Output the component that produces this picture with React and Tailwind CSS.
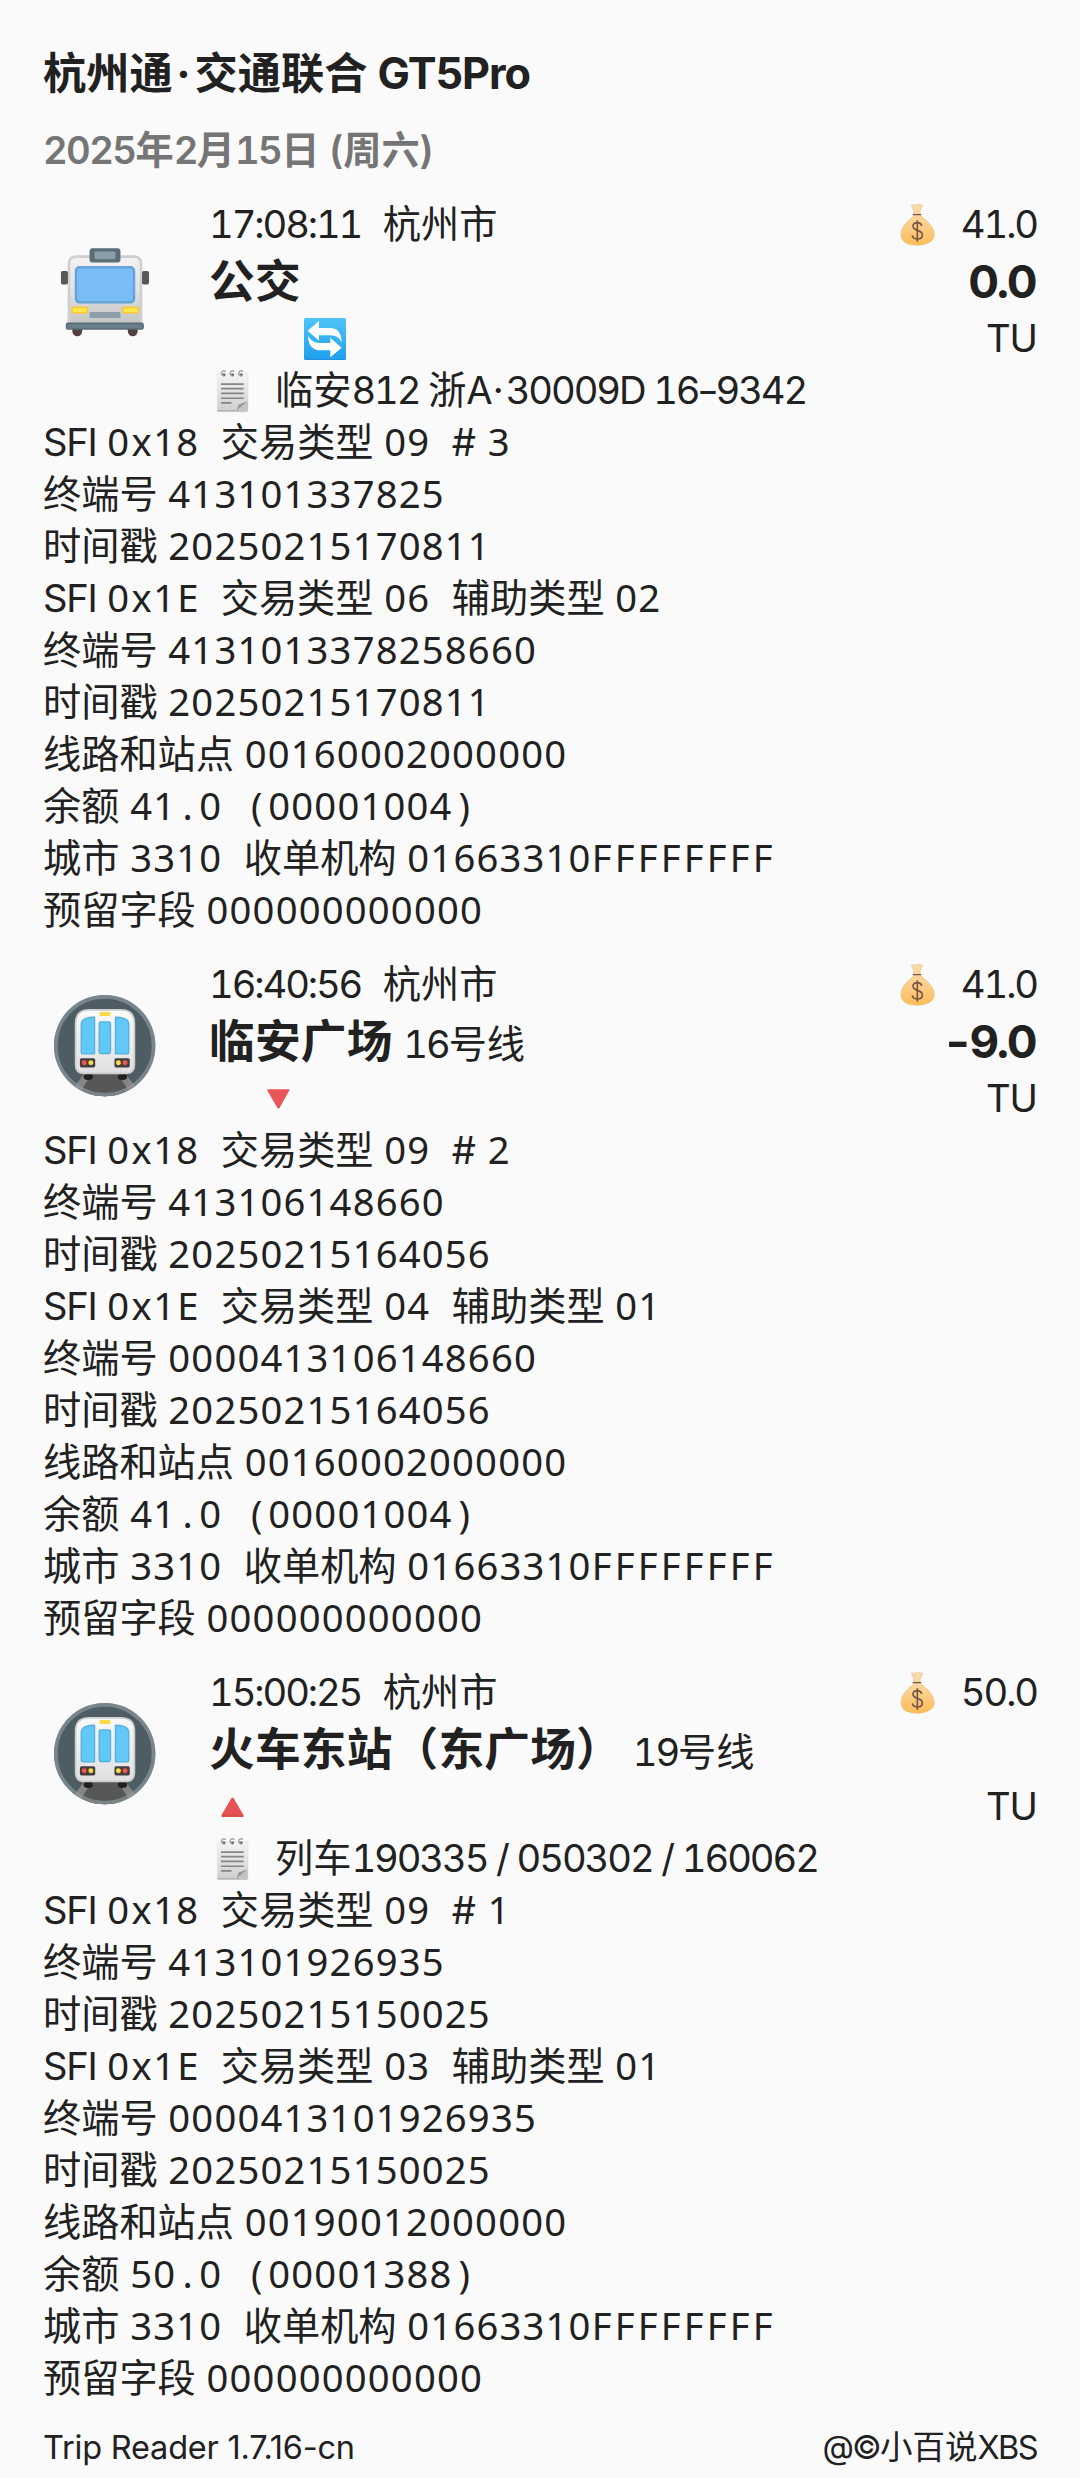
const trips = [
  {
    icon: "bus",
    time: "17:08:11",
    city: "杭州市",
    balance: "41.0",
    title: "公交",
    line: "",
    amount: "0.0",
    mark: "transfer",
    note: [
      { text: "临安" },
      { text: "812", latin: true },
      { text: " ", tight: true },
      { text: "浙" },
      { text: "A", tight: true },
      { text: "·", dot: true },
      { text: "30009D", latin: true },
      { text: " ", tight: true },
      { text: "16", latin: true },
      { text: "-", dash: true },
      { text: "9342", latin: true },
    ],
    type: "09",
    index: "3",
    terminal: "413101337825",
    stamp: "20250215170811",
    type2: "06",
    sub: "02",
    terminal2: "4131013378258660",
    station: "00160002000000",
    raw: "41.0 (00001004)",
  },
  {
    icon: "metro",
    time: "16:40:56",
    city: "杭州市",
    balance: "41.0",
    title: "临安广场",
    line: "16",
    amount: "-9.0",
    mark: "down",
    note: null,
    type: "09",
    index: "2",
    terminal: "413106148660",
    stamp: "20250215164056",
    type2: "04",
    sub: "01",
    terminal2: "0000413106148660",
    station: "00160002000000",
    raw: "41.0 (00001004)",
  },
  {
    icon: "metro",
    time: "15:00:25",
    city: "杭州市",
    balance: "50.0",
    title: "火车东站（东广场）",
    line: "19",
    amount: "",
    mark: "up",
    note: [
      { text: "列车" },
      { text: "190335", latin: true },
      { text: " / ", tight: true },
      { text: "050302", latin: true },
      { text: " / ", tight: true },
      { text: "160062", latin: true },
    ],
    type: "09",
    index: "1",
    terminal: "413101926935",
    stamp: "20250215150025",
    type2: "03",
    sub: "01",
    terminal2: "0000413101926935",
    station: "00190012000000",
    raw: "50.0 (00001388)",
  },
];

const BusIcon = () => (
  <svg viewBox="34 6 325 325" className="w-[108px] h-[108px]">
    <defs>
      <linearGradient id="busBody" x1="0" y1="0" x2="0" y2="1">
        <stop offset="0" stopColor="#f2f2f2" />
        <stop offset="0.5" stopColor="#e2e2e2" />
        <stop offset="1" stopColor="#c4c4c4" />
      </linearGradient>
    </defs>
    <ellipse cx="113" cy="303" rx="15" ry="17" fill="#543f3f" />
    <ellipse cx="280" cy="303" rx="15" ry="17" fill="#543f3f" />
    <path d="M88 285V102q0-22 22-22h173q22 0 22 22v183z" fill="url(#busBody)" stroke="#cfcfcf" strokeWidth="8" />
    <rect x="64" y="123" width="21" height="41" rx="5" fill="#585858" />
    <rect x="308" y="123" width="21" height="41" rx="5" fill="#585858" />
    <rect x="109" y="112" width="175" height="106" rx="11" fill="#78bdf8" stroke="#65a3d6" strokeWidth="7" />
    <rect x="150" y="55" width="93" height="43" rx="9" fill="#5a6d77" />
    <rect x="165" y="65" width="63" height="23" rx="4" fill="#8b9ea9" />
    <rect x="98" y="233" width="45" height="16" fill="#ffe94f" stroke="#fdc834" strokeWidth="5" />
    <rect x="251" y="233" width="45" height="16" fill="#ffe94f" stroke="#fdc834" strokeWidth="5" />
    <rect x="150" y="247" width="93" height="18" rx="3" fill="#8b9ea9" />
    <rect x="81" y="281" width="230" height="17" rx="4" fill="#687f8a" stroke="#586d77" strokeWidth="5" />
  </svg>
);

const MetroIcon = () => (
  <svg viewBox="34 36 325 325" className="w-[108px] h-[108px]">
    <defs>
      <clipPath id="tunnel">
        <circle cx="195.500" cy="197.500" r="152" />
      </clipPath>
      <linearGradient id="metroBody" x1="0" y1="0" x2="0" y2="1">
        <stop offset="0" stopColor="#fafafa" />
        <stop offset="1" stopColor="#e0e0e0" />
      </linearGradient>
    </defs>
    <circle cx="195.500" cy="197.500" r="152.500" fill="#4e5d64" />
    <g clipPath="url(#tunnel)">
      <path d="M135 280h122l60 80H75z" fill="#858585" />
      <path d="M158 280h76l50 80H108z" fill="#575757" />
    </g>
    <circle cx="195.500" cy="197.500" r="147" fill="none" stroke="#94a0a6" strokeOpacity="0.6" strokeWidth="11" />
    <ellipse cx="146" cy="291" rx="14" ry="10" fill="#202020" />
    <ellipse cx="249" cy="291" rx="14" ry="10" fill="#202020" />
    <path
      d="M108 130q0-40 40-40h97q40 0 40 40v125q0 26-26 26H134q-26 0-26-26z"
      fill="url(#metroBody)"
      stroke="#cdcdcd"
      strokeWidth="5"
    />
    <rect x="180" y="96" width="33" height="12" rx="3" fill="#fddb47" />
    <path d="M125 135q0-15 13-19 10-4 27-4v110h-35q-5 0-5-5z" fill="#61c9fa" stroke="#55b0dc" strokeWidth="4" strokeLinejoin="round" />
    <path d="M268 135q0-15-13-19-10-4-27-4v110h35q5 0 5-5z" fill="#61c9fa" stroke="#55b0dc" strokeWidth="4" strokeLinejoin="round" />
    <rect x="179" y="126" width="34" height="95" rx="5" fill="#61c9fa" stroke="#55b0dc" strokeWidth="4" />
    <rect x="121" y="235" width="46" height="28" rx="5" fill="#423e3e" />
    <rect x="225" y="235" width="46" height="28" rx="5" fill="#423e3e" />
    <circle cx="134" cy="249" r="7.500" fill="#f5564c" />
    <circle cx="154" cy="249" r="7.500" fill="#fddb47" />
    <circle cx="237" cy="249" r="7.500" fill="#fddb47" />
    <circle cx="257" cy="249" r="7.500" fill="#f5564c" />
  </svg>
);

const MoneyBag = () => (
  <svg viewBox="120 9 108 132" className="w-9 h-11 mt-[2px]">
    <defs>
      <linearGradient id="bag" x1="0" y1="0" x2="0" y2="1">
        <stop offset="0" stopColor="#f8dcae" />
        <stop offset="0.5" stopColor="#fcd08b" />
        <stop offset="1" stopColor="#fcbc58" />
      </linearGradient>
    </defs>
    <path
      d="M154 16q4-4 10 0 8-4 14-2 6 0 10 2l-5 9q-3 7-3 16 0 5 8 11 35 28 35 51 0 18-20 27-14 6-30 6-50 0-50-33 0-24 30-48 10-8 9-14 0-9-3-15z"
      fill="url(#bag)"
      stroke="#dfb070"
      strokeWidth="1.500"
    />
    <path d="M160 44h22" stroke="#795548" strokeWidth="4" strokeLinecap="round" />
    <path
      d="M185 78q-2-10-13-10-13 0-13 11 0 8 13 12 15 4 15 14 0 12-14 12-14 0-16-11M172 61v64"
      fill="none"
      stroke="#795548"
      strokeWidth="5"
    />
  </svg>
);

const NoteIcon = () => (
  <svg viewBox="48 177 100 132" className="w-[33px] h-11 ml-[7px] mr-[26px]">
    <defs>
      <linearGradient id="paper" x1="0" y1="0" x2="0" y2="1">
        <stop offset="0" stopColor="#f4f4f4" />
        <stop offset="1" stopColor="#cdcfcf" />
      </linearGradient>
    </defs>
    <path d="M55 190h87q3 0 3 3v109q0 4-4 4H56q-4 0-4-4V193q0-3 3-3z" fill="url(#paper)" stroke="#d2d2d2" />
    <path d="M52 303h90" stroke="#a8a8a8" strokeWidth="3" />
    <path d="M63 222h69M63 236h69M63 250h69M63 265h69M63 279h32" stroke="#858585" strokeWidth="5" />
    <path d="M111 302l5-18 28-10z" fill="#9a9a9a" />
    <path d="M113 304l31-30v26q0 4-4 4z" fill="#c4c4c4" />
    {[71, 97, 123].map((x) => (
      <g key={x}>
        <circle cx={x + 1} cy="194" r="5" fill="#6e6e6e" />
        <path d={`M${x + 7} 184q-10-6-13 3-1 9 7 10`} fill="none" stroke="#a0a0a0" strokeWidth="4" />
      </g>
    ))}
  </svg>
);

const TransferIcon = () => (
  <svg viewBox="312 24 126 126" className="w-[42px] h-[42px] ml-[95px] mt-[3px]">
    <defs>
      <linearGradient id="sky" x1="0" y1="0" x2="0" y2="1">
        <stop offset="0" stopColor="#4fc3f7" />
        <stop offset="1" stopColor="#1e9fee" />
      </linearGradient>
    </defs>
    <rect x="312" y="24" width="126" height="126" rx="5" fill="url(#sky)" />
    <path d="M313 147q1 2 4 2h116q3 0 4-2" fill="none" stroke="#2488c8" strokeWidth="2" />
    <path d="M323 62l34-29v21h33q34 0 35 43-9-21-35-21h-33v16z" fill="#fff" />
    <path d="M425 113l-34 29v-21h-29q-37 0-38-44 11 22 38 22h29V83z" fill="#fff" />
  </svg>
);

const DownIcon = () => (
  <svg viewBox="0 0 23 20" className="w-[23px] h-5 ml-[58px] mt-[3px]">
    <path d="M1 0h21q1 1 0 2L12.500 19q-1 1-2 0L.5 2Q0 1 1 0z" fill="#e85757" />
    <path d="M1 0h21l.5 1H.5z" fill="#f37b78" />
  </svg>
);

const UpIcon = () => (
  <svg viewBox="0 0 23 20" className="w-[23px] h-5 ml-[12px] mt-[3px]">
    <path d="M10.500 1q1-1 2 0l10 17q.5 2-1 2h-20q-1.500 0-1-2z" fill="#e55353" />
    <path d="M1 19h21" stroke="#cf4444" />
  </svg>
);

const marks = {
  transfer: <TransferIcon />,
  down: <DownIcon />,
  up: <UpIcon />,
};

const Latin = ({ children }) => (
  <span className="tabular-nums tracking-[-2.1px]">{children}</span>
);

// Fixed 23px cells, the glyphs come from a proportional face
const Mono = ({ children }) => (
  <span className="font-['Noto_Sans']">
    {children.match(/[0-9]+|F+|./g).map((run, i) => {
      if (/[0-9]/.test(run)) {
        return <span key={i} className="tracking-[1.200px]">{run}</span>;
      }
      if (run[0] === "F") {
        return <span key={i} className="tracking-[3.200px]">{run}</span>;
      }
      return <span key={i} className="inline-block w-[23px] text-center">{run}</span>;
    })}
  </span>
);

const NotePart = ({ part }) => {
  if (part.latin) return <Latin>{part.text}</Latin>;
  if (part.tight) return <span className="tracking-[-2px]">{part.text}</span>;
  if (part.dot) return <span className="inline-block w-[15px] text-center">{part.text}</span>;
  if (part.dash) return <span className="inline-block w-[17px] text-center scale-x-125">{part.text}</span>;
  return <span>{part.text}</span>;
};

const Amount = ({ value }) => (
  <div className="mr-[2px] tracking-[-2.500px]">
    {value.startsWith("-") && <span className="inline-block mr-[4px] scale-x-115">-</span>}
    {value.replace("-", "")}
  </div>
);

const Row = ({ children }) => (
  <div className="h-[52px] leading-[52px] whitespace-pre">{children}</div>
);

const Trip = ({ trip }) => (
  <section className="mb-[21px]">
    <div className="flex">
      <div className="w-[166px] pt-9 pl-[8px]">
        {trip.icon === "bus" ? <BusIcon /> : <MetroIcon />}
      </div>

      <div className="flex-1">
        <div className="flex h-14 leading-[56px]">
          <div className="flex-1 whitespace-pre">
            <Latin>{trip.time}</Latin>{"  "}{trip.city}
          </div>
          <div className="flex items-center gap-[25px]">
            <MoneyBag />
            <Latin>{trip.balance}</Latin>
          </div>
        </div>

        <div className="flex justify-between h-[58px] leading-[60px] text-[45.700px] font-bold">
          <div className="whitespace-pre">
            <span className="tracking-[0.200px]">{trip.title}</span>
            {trip.line && (
              <span className="text-[38.200px] font-normal"> <Latin>{trip.line}</Latin>号线</span>
            )}
          </div>
          <Amount value={trip.amount} />
        </div>

        <div className="flex items-center justify-between h-[55px] leading-[55px]">
          {marks[trip.mark]}
          <span className="mt-[2px] tracking-[-1px]">TU</span>
        </div>

        {trip.note && (
          <div className="flex items-center h-[52px] whitespace-pre">
            <NoteIcon />
            <div className="h-[52px] leading-[50px]">
              {trip.note.map((part, i) => <NotePart key={i} part={part} />)}
            </div>
          </div>
        )}
      </div>
    </div>

    <div className="-mt-[2px]">
      <Row><span className="tracking-[-1.300px]">SFI</span> <Mono>0x18</Mono>{"  "}交易类型 <Mono>{trip.type}</Mono>{"  "}<span className="mr-[1px]">#</span> <Mono>{trip.index}</Mono></Row>
      <Row>终端号 <Mono>{trip.terminal}</Mono></Row>
      <Row>时间戳 <Mono>{trip.stamp}</Mono></Row>
      <Row><span className="tracking-[-1.300px]">SFI</span> <Mono>0x1E</Mono>{"  "}交易类型 <Mono>{trip.type2}</Mono>{"  "}辅助类型 <Mono>{trip.sub}</Mono></Row>
      <Row>终端号 <Mono>{trip.terminal2}</Mono></Row>
      <Row>时间戳 <Mono>{trip.stamp}</Mono></Row>
      <Row>线路和站点 <Mono>{trip.station}</Mono></Row>
      <Row>余额 <Mono>{trip.raw}</Mono></Row>
      <Row>城市 <Mono>3310</Mono>{"  "}收单机构 <Mono>01663310FFFFFFFF</Mono></Row>
      <Row>预留字段 <Mono>000000000000</Mono></Row>
    </div>
  </section>
);

export default function App() {
  return (
    <div className="w-[1080px] h-[2478px] overflow-hidden bg-[#fafafa] px-[43px] text-[#212121] text-[38.200px] font-['Inter','Noto_Sans_CJK_SC',sans-serif]">
      <h1 className="pt-[43px] h-[111px] leading-[60px] text-[43.200px] font-bold whitespace-pre">
        杭州通<span className="inline-block w-[22px] text-center">·</span>交通联合 <span className="tracking-[-1px]">GT5Pro</span>
      </h1>
      <h2 className="h-[85px] leading-[78px] text-[#757575] font-semibold whitespace-pre">
        <span className="tabular-nums tracking-[-1.600px]">2025</span>年<span className="tabular-nums tracking-[-1.600px]">2</span>月<span className="tabular-nums tracking-[-1.600px]">15</span>日 (周六)
      </h2>

      {trips.map((trip) => (
        <Trip key={trip.time} trip={trip} />
      ))}

      <footer className="flex justify-between leading-[48px] text-[32.500px]">
        <span className="tracking-[-0.200px]">Trip Reader 1.7.16-cn</span>
        <span><span className="tracking-[-1.800px]">@©</span>小百说<span className="tracking-[-1.600px]">XBS</span></span>
      </footer>
    </div>
  );
}
